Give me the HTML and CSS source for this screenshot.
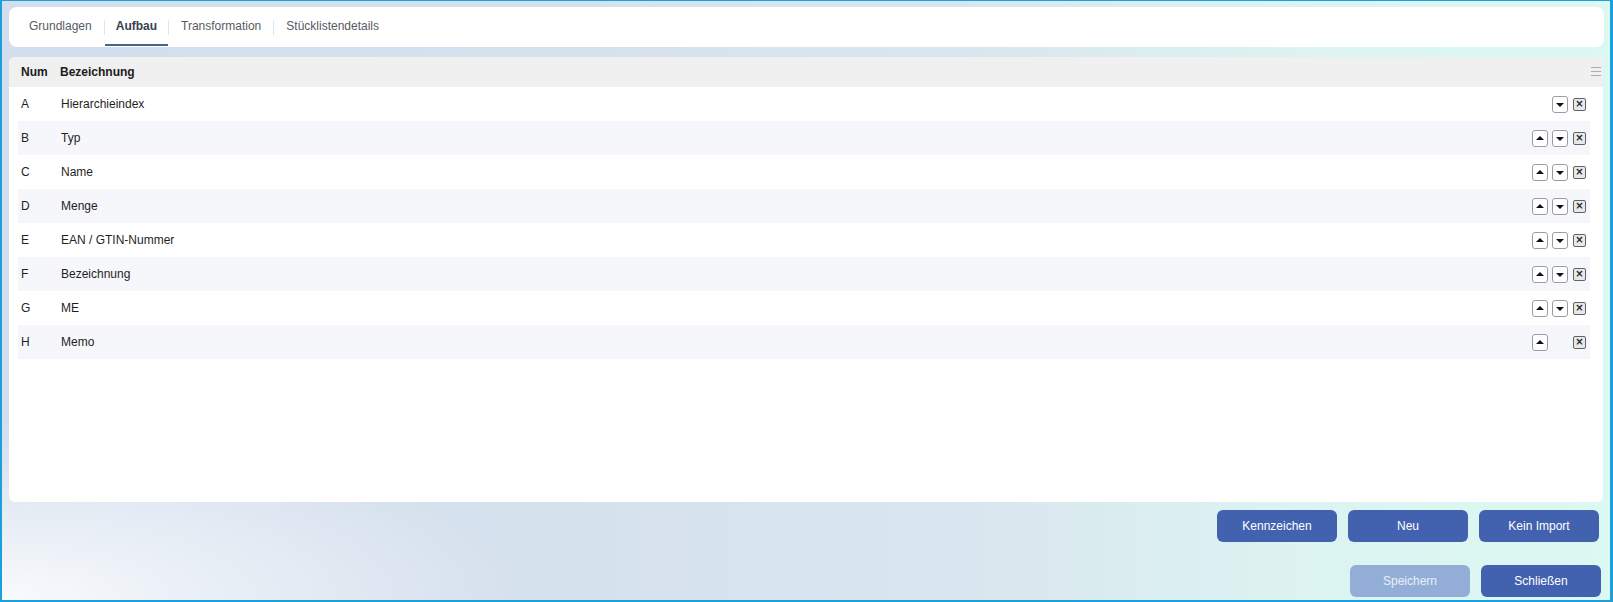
FILE: index.html
```html
<!DOCTYPE html>
<html lang="de">
<head>
<meta charset="utf-8">
<title>Aufbau</title>
<link rel="stylesheet" href="styles.css">
</head>
<body>
<div class="frame">
  <nav class="tabs">
    <a class="tab">Grundlagen</a>
    <span class="sep"></span>
    <a class="tab active">Aufbau</a>
    <span class="sep"></span>
    <a class="tab">Transformation</a>
    <span class="sep"></span>
    <a class="tab">Stücklistendetails</a>
  </nav>

  <section class="grid">
    <div class="grid-head">
      <span class="h-num">Num</span>
      <span class="h-name">Bezeichnung</span>
      <span class="menu"><i></i><i></i><i></i></span>
    </div>
    <div class="rows">
      <div class="row"><span class="num">A</span><span class="name">Hierarchieindex</span>
        <span class="acts"><span class="slot"></span><button class="mv dn"></button><button class="del">×</button></span></div>
      <div class="row alt"><span class="num">B</span><span class="name">Typ</span>
        <span class="acts"><button class="mv up"></button><button class="mv dn"></button><button class="del">×</button></span></div>
      <div class="row"><span class="num">C</span><span class="name">Name</span>
        <span class="acts"><button class="mv up"></button><button class="mv dn"></button><button class="del">×</button></span></div>
      <div class="row alt"><span class="num">D</span><span class="name">Menge</span>
        <span class="acts"><button class="mv up"></button><button class="mv dn"></button><button class="del">×</button></span></div>
      <div class="row"><span class="num">E</span><span class="name">EAN / GTIN-Nummer</span>
        <span class="acts"><button class="mv up"></button><button class="mv dn"></button><button class="del">×</button></span></div>
      <div class="row alt"><span class="num">F</span><span class="name">Bezeichnung</span>
        <span class="acts"><button class="mv up"></button><button class="mv dn"></button><button class="del">×</button></span></div>
      <div class="row"><span class="num">G</span><span class="name">ME</span>
        <span class="acts"><button class="mv up"></button><button class="mv dn"></button><button class="del">×</button></span></div>
      <div class="row alt"><span class="num">H</span><span class="name">Memo</span>
        <span class="acts"><button class="mv up"></button><span class="slot"></span><button class="del">×</button></span></div>
    </div>
  </section>

  <div class="btn-row first">
    <button class="btn">Kennzeichen</button>
    <button class="btn">Neu</button>
    <button class="btn">Kein Import</button>
  </div>
  <div class="btn-row second">
    <button class="btn disabled">Speichern</button>
    <button class="btn">Schließen</button>
  </div>
</div>
</body>
</html>
```

FILE: styles.css
```css
html, body {
  margin: 0;
  padding: 0;
}
body {
  font-family: "Liberation Sans", Arial, sans-serif;
  font-size: 12px;
  color: #1f1f1f;
}
.frame {
  box-sizing: border-box;
  width: 1613px;
  height: 602px;
  border-style: solid;
  border-color: #1ba0dc;
  border-width: 1px 3px 2px 2px;
  padding: 6px 6px 0 7px;
  display: flex;
  flex-direction: column;
  background:
    radial-gradient(ellipse 520px 180px at 0% 100%, rgba(255,255,255,0.85), rgba(255,255,255,0) 100%),
    linear-gradient(90deg, #d2deed 0%, #d6e1ee 35%, #d9e6ef 60%, #dcf3f1 80%, #dcf8f2 100%);
}

/* Tabs */
.tabs {
  height: 40px;
  background: #fff;
  border-radius: 8px;
  display: flex;
  align-items: center;
  padding-left: 8px;
  box-sizing: border-box;
}
.tab {
  box-sizing: border-box;
  height: 40px;
  padding: 1px 12px 0 12px;
  display: flex;
  align-items: center;
  color: #555b63;
  border-bottom: 2px solid transparent;
  margin-top: -2px;
}
.tab.active {
  font-weight: bold;
  color: #364150;
  border-bottom-color: #4b6384;
  padding: 1px 11px 0 11px;
}
.sep {
  width: 1px;
  height: 15px;
  background: #e3e5e8;
}

/* Grid card */
.grid {
  margin-top: 10px;
  height: 445px;
  margin-right: 1px;
  background: #fff;
  border-radius: 6px;
  overflow: hidden;
}
.grid-head {
  height: 30px;
  background: #f0f0f0;
  display: flex;
  align-items: center;
  padding-left: 12px;
  font-weight: bold;
  color: #1c1c1c;
}
.h-num { width: 39px; }
.h-name { flex: 1; }
.menu {
  width: 10px;
  display: flex;
  flex-direction: column;
  gap: 3px;
  margin-right: 2px;
  margin-top: -2px;
}
.menu i {
  display: block;
  height: 1px;
  background: #a9adb2;
}
.rows {
  margin: 0 13px 0 9px;
}
.row {
  height: 34px;
  display: flex;
  align-items: center;
  padding-left: 3px;
  padding-right: 4px;
}
.row.alt { background: #f6f7fb; }
.num { width: 40px; }
.name { flex: 1; }
.acts {
  display: flex;
  align-items: center;
}
.slot {
  width: 16px;
  height: 17px;
  margin-left: 4px;
}
.acts > :first-child { margin-left: 0; }
.mv {
  box-sizing: border-box;
  width: 16px;
  height: 17px;
  margin: 0 0 0 4px;
  padding: 0;
  border: 1px solid #9a9ea4;
  border-radius: 3px;
  background: #fff;
  position: relative;
}
.mv::after {
  content: "";
  position: absolute;
  left: 3px;
  top: 6px;
  border-left: 4px solid transparent;
  border-right: 4px solid transparent;
}
.mv.up::after { border-bottom: 4px solid #111; top: 5px; }
.mv.dn::after { border-top: 4px solid #111; top: 6px; }
.del {
  box-sizing: border-box;
  width: 13px;
  height: 13px;
  margin-left: 5px;
  padding: 0;
  border: 1px solid #5f6369;
  border-radius: 2px;
  background: #e6e8ea;
  color: #222;
  font-family: "DejaVu Sans", sans-serif;
  font-size: 10px;
  font-weight: bold;
  line-height: 10px;
  text-align: center;
}

/* Buttons */
.btn-row {
  display: flex;
  justify-content: flex-end;
  gap: 11px;
}
.btn-row.first {
  margin-top: 8px;
  padding-right: 5px;
}
.btn-row.second {
  margin-top: 23px;
  padding-right: 3px;
}
.btn {
  width: 120px;
  height: 32px;
  border: none;
  border-radius: 6px;
  background: #4262b0;
  color: #fff;
  font-family: "Liberation Sans", Arial, sans-serif;
  font-size: 12px;
  padding: 0;
}
.btn.disabled {
  background: #93aed6;
  color: #e9eff8;
}
```
